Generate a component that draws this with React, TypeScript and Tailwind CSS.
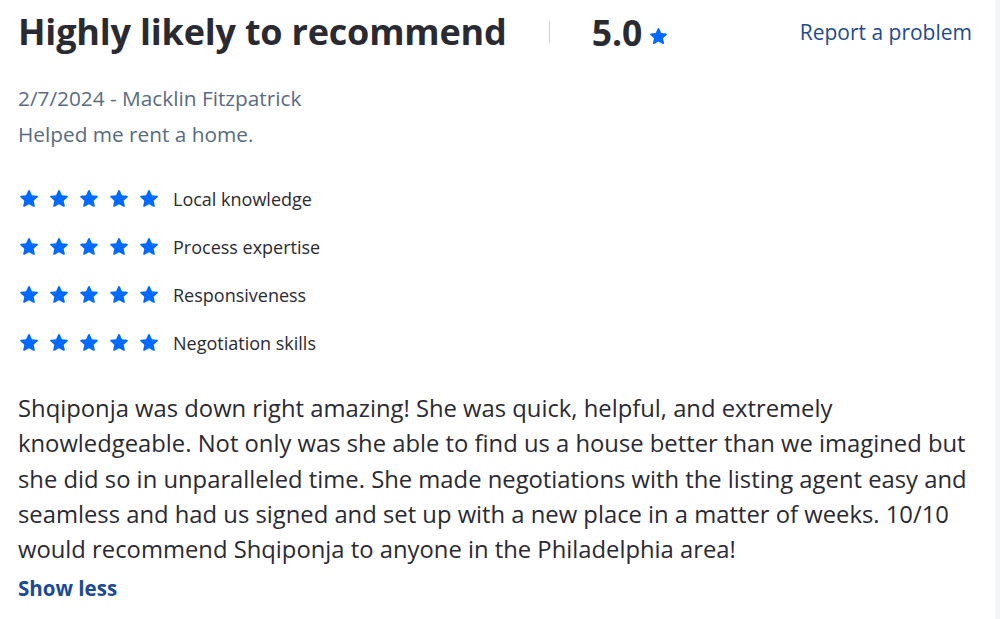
import React from 'react';

const Star = ({ size = 22 }: { size?: number }) => (
  <svg width={size} height={size} viewBox="0 0 24 24" fill="#006aff">
    <path
      d="M12 2.2c.4 0 .75.23.9.6l2.3 5.1 5.55.55c.4.04.74.31.86.7.12.38 0 .8-.3 1.06l-4.2 3.7 1.22 5.45c.09.39-.07.8-.4 1.03-.32.24-.76.26-1.1.05L12 17.6l-4.83 2.84c-.35.21-.78.19-1.1-.05-.33-.23-.49-.64-.4-1.03l1.22-5.45-4.2-3.7c-.3-.26-.42-.68-.3-1.06.12-.39.46-.66.86-.7L8.8 7.9l2.3-5.1c.15-.37.5-.6.9-.6z"
    />
  </svg>
);

const categories = ['Local knowledge', 'Process expertise', 'Responsiveness', 'Negotiation skills'];

const App: React.FC = () => {
  return (
    <div className="flex min-h-[619px] w-[1000px] bg-white font-['Open_Sans',sans-serif] text-[#2a2a33]">
      <div className="flex-1 pl-[18px] pr-[18px] pt-[10px]">
        {/* header */}
        <div className="flex items-center">
          <h2 className="text-[36px] font-bold leading-[44px] tracking-[-0.2px]">Highly likely to recommend</h2>
          <div className="mx-[42px] h-[22px] w-px bg-[#d1d1d5]" />
          <div className="flex items-end">
            <span className="text-[35.5px] font-bold leading-[44px]">5.0</span>
            <span className="mb-[7px] ml-[6px]">
              <Star size={21} />
            </span>
          </div>
          <a href="#" className="ml-auto mr-[5px] text-[21px] leading-[44px] text-[#1d4a8e]">
            Report a problem
          </a>
        </div>

        {/* meta */}
        <div className="mt-[26px] text-[20.8px] leading-[36px] text-[#596b82]">
          <p>2/7/2024 - Macklin Fitzpatrick</p>
          <p>Helped me rent a home.</p>
        </div>

        {/* sub ratings */}
        <ul className="mt-[36px] flex flex-col gap-[26px]">
          {categories.map((c) => (
            <li key={c} className="flex h-[22px] items-center">
              <div className="flex gap-[8px]">
                {[0, 1, 2, 3, 4].map((i) => (
                  <Star key={i} />
                ))}
              </div>
              <span className="ml-[13px] text-[18px] text-[#2a2a33]">{c}</span>
            </li>
          ))}
        </ul>

        {/* review body */}
        <p className="mt-[37px] text-[23.8px] leading-[35.3px]">
          Shqiponja was down right amazing! She was quick, helpful, and extremely knowledgeable. Not only was she
          able to find us a house better than we imagined but she did so in unparalleled time. She made negotiations
          with the listing agent easy and seamless and had us signed and set up with a new place in a matter of
          weeks. 10/10 would recommend Shqiponja to anyone in the Philadelphia area!
        </p>
        <button className="mt-[6px] text-[20.5px] font-bold leading-[30px] text-[#1a4a94]">Show less</button>
      </div>
      <div className="w-[5px] bg-[#f4f5f7]" />
    </div>
  );
};

export default App;
